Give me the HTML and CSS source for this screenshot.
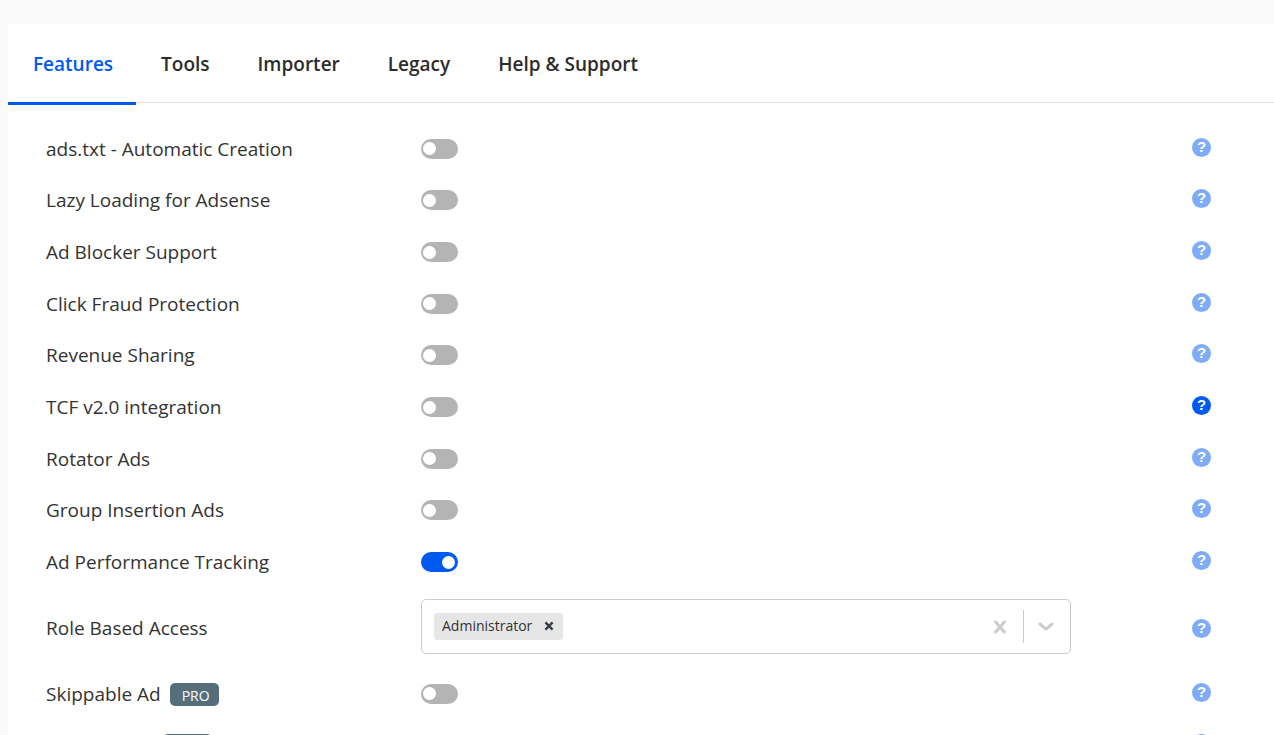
FILE: index.html
```html
<!DOCTYPE html>
<html lang="en">
<head>
<meta charset="utf-8">
<title>Settings</title>
<link rel="stylesheet" href="styles.css">
</head>
<body>
<main class="panel">
  <nav class="tabs">
    <a class="tab active" href="#features">Features</a>
    <a class="tab" href="#tools">Tools</a>
    <a class="tab" href="#importer">Importer</a>
    <a class="tab" href="#legacy">Legacy</a>
    <a class="tab" href="#help">Help &amp; Support</a>
  </nav>
  <form class="settings">
    <div class="group">
      <div class="row"><label for="f1">ads.txt - Automatic Creation</label><input class="switch" type="checkbox" id="f1"><button class="help" type="button">?</button></div>
      <div class="row"><label for="f2">Lazy Loading for Adsense</label><input class="switch" type="checkbox" id="f2"><button class="help" type="button">?</button></div>
      <div class="row"><label for="f3">Ad Blocker Support</label><input class="switch" type="checkbox" id="f3"><button class="help" type="button">?</button></div>
      <div class="row"><label for="f4">Click Fraud Protection</label><input class="switch" type="checkbox" id="f4"><button class="help" type="button">?</button></div>
      <div class="row"><label for="f5">Revenue Sharing</label><input class="switch" type="checkbox" id="f5"><button class="help" type="button">?</button></div>
      <div class="row"><label for="f6">TCF v2.0 integration</label><input class="switch" type="checkbox" id="f6"><button class="help current" type="button">?</button></div>
      <div class="row"><label for="f7">Rotator Ads</label><input class="switch" type="checkbox" id="f7"><button class="help" type="button">?</button></div>
      <div class="row"><label for="f8">Group Insertion Ads</label><input class="switch" type="checkbox" id="f8"><button class="help" type="button">?</button></div>
      <div class="row"><label for="f9">Ad Performance Tracking</label><input class="switch" type="checkbox" id="f9" checked><button class="help" type="button">?</button></div>
    </div>
    <div class="row tall">
      <label for="roles">Role Based Access</label>
      <div class="multi">
        <span class="chip">Administrator
          <button class="icon" type="button"><svg width="10" height="10" viewBox="0 0 10 10"><path d="M1.4 1.4l7.2 7.2M8.6 1.4L1.4 8.6" stroke="#333b44" stroke-width="2.3"/></svg></button>
        </span>
        <input class="entry" id="roles" type="text">
        <button class="icon clear" type="button"><svg width="14" height="14" viewBox="0 0 14 14"><path d="M2.6 2l8.8 10M11.4 2L2.6 12" stroke="#ccc" stroke-width="3" stroke-linecap="round"/></svg></button>
        <span class="divider"></span>
        <button class="icon open" type="button"><svg width="16" height="10" viewBox="0 0 16 10"><path d="M2 2l6 5.2L14 2" fill="none" stroke="#ccc" stroke-width="3" stroke-linecap="round" stroke-linejoin="round"/></svg></button>
      </div>
      <button class="help" type="button">?</button>
    </div>
    <div class="group">
      <div class="row"><label for="f10">Skippable Ad<span class="pro">PRO</span></label><input class="switch" type="checkbox" id="f10"><button class="help" type="button">?</button></div>
      <div class="row"><label for="f11">Parallax Ads<span class="pro">PRO</span></label><input class="switch" type="checkbox" id="f11"><button class="help" type="button">?</button></div>
    </div>
  </form>
</main>
</body>
</html>
```

FILE: styles.css
```css
* { box-sizing: border-box; }
body {
  margin: 0;
  padding: 24px 0 0 8px;
  height: 100vh;
  overflow: hidden;
  background: #f9f9f9;
  color: #333;
  font-family: "Segoe UI", "Open Sans", "Noto Sans", sans-serif;
  font-size: 19px;
}
button, input { font: inherit; margin: 0; }
button { border: 0; padding: 0; background: none; cursor: pointer; }
.panel { background: #fff; min-height: 100%; }
.tabs { display: flex; height: 79px; border-bottom: 1px solid #ddd; }
.tab {
  display: flex;
  align-items: center;
  height: 81px;
  padding: 1px 23px 0 25px;
  color: #2c2c2c;
  font-size: 19px;
  font-weight: 600;
  text-decoration: none;
  border-bottom: 3px solid transparent;
}
.tab.active { color: #005af0; border-color: #005af0; }
.settings { padding: 20px 63px 0 38px; }
.group { display: grid; grid-auto-rows: 1fr; min-height: 465px; }
.tall + .group { min-height: 103px; }
.row {
  display: grid;
  grid-template-columns: 375px 1fr auto;
  align-items: center;
}
.row.tall { min-height: 80px; }
label { display: flex; align-items: center; line-height: 26px; }
.switch {
  appearance: none;
  display: flex;
  align-items: center;
  width: 37px;
  height: 20px;
  padding: 0 2px;
  border-radius: 10px;
  background: #b4b4b4;
}
.switch::before {
  content: "";
  width: 13px;
  height: 13px;
  border-radius: 50%;
  background: #fff;
}
.switch:checked { background: #005af0; justify-content: flex-end; padding-right: 3px; }
.help {
  width: 19px;
  height: 19px;
  margin-bottom: 3px;
  padding-bottom: 2px;
  border-radius: 50%;
  background: #7facf8;
  color: #fff;
  font-family: "Liberation Sans", Arial, sans-serif;
  font-size: 15px;
  font-weight: 700;
  line-height: 17px;
}
.help.current { background: #005af0; }
.tall .help { margin-bottom: 0; }
.multi {
  display: flex;
  align-items: center;
  max-width: 650px;
  height: 55px;
  margin-bottom: 3px;
  padding: 0 16px 0 12px;
  border: 1px solid #ccc;
  border-radius: 5px;
}
.chip {
  display: flex;
  align-items: center;
  gap: 12px;
  height: 27px;
  padding: 0 9px 1px 8px;
  border-radius: 3px;
  background: #e6e6e6;
  font-size: 14px;
  line-height: 20px;
}
.icon { display: flex; }
.entry { flex: 1; min-width: 0; border: 0; outline: 0; background: none; }
.divider { width: 1px; height: 33px; margin: 0 14px 0 16px; background: #ccc; }
.pro {
  margin: 1px 0 0 9px;
  padding: 2px 9px 0 12px;
  border-radius: 5px;
  background: #546e7a;
  color: #fff;
  font-size: 14px;
  line-height: 21px;
}
```
